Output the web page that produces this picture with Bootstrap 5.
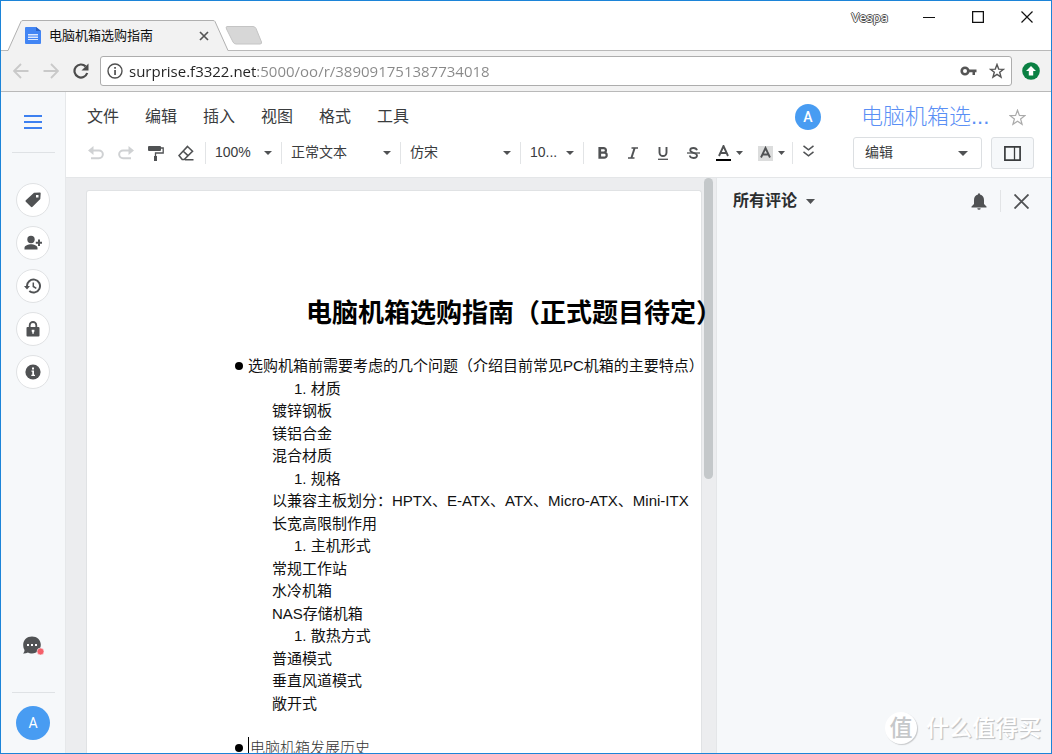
<!DOCTYPE html>
<html lang="zh-CN">
<head>
<meta charset="utf-8">
<meta name="viewport" content="width=device-width, initial-scale=1">
<title>电脑机箱选购指南</title>
<link rel="stylesheet" href="https://cdn.jsdelivr.net/npm/bootstrap@5.3.0/dist/css/bootstrap.min.css">
<style>
  body { font-family: "Liberation Sans", "Noto Sans CJK SC", sans-serif; font-size: 14px; color: #3a3c3e; background: #fff; }
  button { color: inherit; }
  svg { display: block; flex: none; }
  .window { border: 1px solid #1c84d8; }
  .plain { border: 0; background: none; padding: 0; display: flex; align-items: center; justify-content: center; flex: none; }

  /* browser chrome */
  .titlebar { height: 50px; border-bottom: 1px solid #b9b9b9; padding-left: 6px; }
  .tab { width: 222px; height: 31px; margin-bottom: -1px; padding: 0 20px 0 18px; color: #111; font-size: 13px; }
  .tab-shape { position: absolute; inset: 0; z-index: 0; }
  .tab > :not(.tab-shape) { position: relative; }
  .newtab { margin: 0 0 4px -4px; }
  .profile { color: #fff; font-size: 13px; font-family: "Noto Sans", sans-serif; line-height: 16px; text-shadow: 1px 0 #555, -1px 0 #555, 0 1px #555, 0 -1px #555; }
  .winbtn { width: 49px; height: 31px; color: #111; }
  .addressbar { height: 41px; background: #f2f2f2; border-bottom: 1px solid #b9b9b9; padding: 0 11px 0 5px; }
  .navbtn { width: 30px; height: 30px; color: #c9c9c9; }
  .omnibox { height: 30px; border: 1px solid #adadad; border-radius: 3px; background: #fff; padding: 0 6px; margin: 0 10px 0 4px; }
  .url { border: 0; outline: 0; padding: 0; margin-left: 6px; height: 26px; font-family: "Open Sans", "Noto Sans", sans-serif; font-size: 15px;
    color: transparent; background: linear-gradient(to right, #222 127px, #888 127px); -webkit-background-clip: text; background-clip: text; }

  /* left rail */
  .rail { width: 65px; background: #f6f8fa; border-right: 1px solid #e6e8ea; color: #505254; }
  .rail-menu { height: 60px; width: 64px; color: #3d80f0; }
  .rule { width: 43px; height: 1px; background: #dfe2e5; flex: none; }
  .round { width: 34px; height: 34px; border: 1px solid #e0e2e4; border-radius: 50%; background: #fff; }
  .round-list { gap: 9px; padding-top: 30px; }
  .rail-foot { gap: 13px; padding-bottom: 13px; }
  .chat { margin-bottom: 23px; }
  .avatar { background: #489cf2; color: #fff; border-radius: 50%; font-family: Roboto, sans-serif; }
  .avatar-lg { width: 34px; height: 34px; font-size: 14px; }
  .avatar-sm { width: 26px; height: 26px; font-size: 14px; font-weight: 500; margin-right: 32px; }

  /* document header */
  .dochead { height: 86px; border-bottom: 1px solid #e4e6e8; padding: 7px 17px 6px 0; }
  .rowline { height: 36px; }
  .menus { gap: 26px; padding-left: 21px; font-size: 16px; }
  .tools { padding-left: 15px; color: #505254; }
  .tool { width: 30px; height: 30px; }
  .tool-wide { width: 42px; height: 30px; gap: 5px; }
  .faded { color: #cfd1d3; }
  .sep { width: 1px; height: 22px; background: #e2e4e6; flex: none; }
  .pick { appearance: none; border: 0; height: 30px; padding: 0 18px 2px 9px; font-size: 14px; color: #3a3c3e; flex: none;
    background: #fff url("data:image/svg+xml,%3Csvg xmlns='http://www.w3.org/2000/svg' width='8' height='4'%3E%3Cpath d='M0 0h8L4 4z' fill='%23505254'/%3E%3C/svg%3E") no-repeat right 9px center; }
  .pick-zoom { width: 75px; } .pick-style { width: 118px; } .pick-font { width: 119px; } .pick-size { width: 62px; }
  .pick-mode { width: 129px; height: 32px; padding-left: 11px; border: 1px solid #dcdfe2; border-radius: 3px;
    background-image: url("data:image/svg+xml,%3Csvg xmlns='http://www.w3.org/2000/svg' width='10' height='5'%3E%3Cpath d='M0 0h10L5 5z' fill='%23505254'/%3E%3C/svg%3E"); background-position: right 13px center; }
  .side { width: 181px; flex: none; }
  .doctitle { font-size: 22px; line-height: 30px; color: #5a8ff5; font-weight: 300; text-decoration: none; white-space: nowrap; }
  .split { width: 43px; height: 32px; border: 1px solid #dcdfe2; border-radius: 3px; background: #f6f8fa; }

  /* editor */
  .canvas { background: #ecedef; padding: 12px 14px 0 20px; min-width: 0; }
  .thumb { position: absolute; top: 0; right: 3px; width: 9px; height: 301px; border-radius: 5px; background: #c4c8ca; }
  .sheet { background: #fff; border: 1px solid #e0e2e4; border-bottom: 0; border-radius: 3px 3px 0 0; padding: 103px 0 0 148px; color: #111; font-size: 15px; line-height: 1.5; white-space: nowrap; }
  .sheet h1 { font-size: 26px; line-height: 39px; font-weight: 700; color: #000; margin: 0 0 22px; padding-left: 71px; }
  .sheet ul, .sheet p { margin: 0; padding: 0; list-style: none; }
  .dot { gap: 5px; }
  .dot::before { content: ""; flex: none; width: 8px; height: 8px; border-radius: 50%; background: #000; }
  .sheet .step { padding-left: 59px; }
  .sheet .sub { padding-left: 37px; }
  .sheet .later { margin-top: 22px; color: #333; font-weight: 300; }
  .caretmark { border-left: 1px solid #000; padding-left: 1px; }

  /* comments panel */
  .panel { width: 335px; flex: none; background: #f6f8fa; border-left: 1px solid #e4e6e8; color: #505254; }
  .panel-head { height: 46px; padding: 0 22px 0 16px; gap: 13px; }
  .panel-title { color: #2c2e30; font-size: 16px; font-weight: 700; gap: 9px; }
  .stamp { position: absolute; right: 10px; bottom: 8px; gap: 9px; color: #fff; font-size: 23px; line-height: 34px; font-weight: 500; text-shadow: 1px 1px 1px #c2c4c6, 1px 1px #d0d2d4; }
  .stamp-disc { width: 32px; height: 32px; border-radius: 50%; background: #fff; color: #c6c8ca; text-shadow: none; box-shadow: 1px 1px 1px #c8cacc; }
</style>
</head>
<body>
<div class="window vh-100 d-flex flex-column overflow-hidden position-relative">
  <header>
    <div class="titlebar d-flex align-items-end">
      <div class="tab d-flex align-items-center position-relative">
        <svg class="tab-shape" width="222" height="31" viewBox="0 0 222 31" fill="#f2f2f2" stroke="#b0b0b0"><path d="M0 30.500H1L14 1.500Q14.500 .5 16 .5H206Q207.500 .5 208 1.500L221 30.500"/><path d="M1.500 30.500H220.500" stroke="#f2f2f2"/></svg>
        <svg width="16" height="17" viewBox="0 0 16 17"><path fill="#4285f4" d="M1 0h10l5 4v12a1 1 0 0 1-1 1H1a1 1 0 0 1-1-1V1a1 1 0 0 1 1-1z"/><path fill="#2a62c4" d="M11 0l5 4h-5z"/><path fill="#dce8fd" d="M3 7h10v1.500H3zM3 9.500h10V11H3zM3 12h10v1H3z"/></svg>
        <span class="ms-1 ps-1 flex-grow-1">电脑机箱选购指南</span>
        <button class="plain" aria-label="关闭标签页"><svg width="10" height="10" viewBox="0 0 10 10" stroke="#555" stroke-width="1.700"><path d="M1 1l8 8M9 1l-8 8"/></svg></button>
      </div>
      <button class="plain newtab" aria-label="新标签页"><svg width="38" height="20" viewBox="0 0 38 20"><path d="M2 .5h26q2 0 3 2l5.500 13.500q.5 2-1.500 2H11q-2 0-3-2L1.500 3q-1-2.500.5-2.500z" fill="#d7d7d7" stroke="#c4c4c4"/></svg></button>
      <div class="ms-auto d-flex align-items-center align-self-start">
        <span class="profile me-3">Vespa</span>
        <button class="plain winbtn" aria-label="最小化"><svg width="12" height="12" viewBox="0 0 12 12" stroke="currentColor"><path d="M0 6.500h12"/></svg></button>
        <button class="plain winbtn" aria-label="最大化"><svg width="12" height="12" viewBox="0 0 12 12" fill="none" stroke="currentColor" stroke-width="1.300"><path d="M.6.6h10.800v10.800H.6z"/></svg></button>
        <button class="plain winbtn" aria-label="关闭"><svg width="12" height="12" viewBox="0 0 12 12" stroke="currentColor" stroke-width="1.200"><path d="M.5.5l11 11M11.500.5l-11 11"/></svg></button>
      </div>
    </div>
    <div class="addressbar d-flex align-items-center">
      <button class="plain navbtn" aria-label="后退"><svg width="16" height="16" viewBox="0 0 16 16" fill="none" stroke="currentColor" stroke-width="1.800"><path d="M15.500 8H1.500M8 1L1 8l7 7"/></svg></button>
      <button class="plain navbtn" aria-label="前进"><svg width="16" height="16" viewBox="0 0 16 16" fill="none" stroke="currentColor" stroke-width="1.800"><path d="M.5 8h14M8 1l7 7-7 7"/></svg></button>
      <button class="plain navbtn" aria-label="刷新"><svg width="16" height="16" viewBox="0 0 16 16"><path d="M12.600 3.400A6.500 6.500 0 1 0 14.200 10" fill="none" stroke="#4c4c4c" stroke-width="2.200"/><path d="M15.500.5v7h-7z" fill="#4c4c4c"/></svg></button>
      <div class="omnibox d-flex align-items-center flex-grow-1">
        <svg width="16" height="16" viewBox="0 0 16 16"><circle cx="8" cy="8" r="7" fill="none" stroke="#505050" stroke-width="1.400"/><path d="M7.200 7h1.700v5H7.200zM7.200 4h1.700v1.700H7.200z" fill="#505050"/></svg>
        <input class="url flex-grow-1" type="text" aria-label="地址" value="surprise.f3322.net:5000/oo/r/389091751387734018">
        <svg class="me-2" width="17" height="12" viewBox="0 0 17 12"><circle cx="5" cy="6" r="3.300" fill="none" stroke="#555" stroke-width="2.600"/><path d="M8 4.500h8.500v2.800H15V10h-2.500V7.300H8z" fill="#555"/></svg>
        <button class="plain ms-1" aria-label="收藏"><svg width="16" height="16" viewBox="0 0 16 16" fill="none" stroke="#555" stroke-width="1.400"><path d="M8 1.500l1.700 4.600 4.800.2-3.800 3 1.300 4.700L8 11.300 4 14l1.300-4.700-3.800-3 4.800-.2z"/></svg></button>
      </div>
      <button class="plain" aria-label="更新"><svg width="18" height="18" viewBox="0 0 18 18"><circle cx="9" cy="9" r="8.800" fill="#0b8043"/><path fill="#fff" d="M9 4l5 5h-2.800v4.500H6.800V9H4z"/></svg></button>
    </div>
  </header>

  <div class="d-flex flex-grow-1 overflow-hidden">
    <nav class="rail d-flex flex-column align-items-center flex-shrink-0" aria-label="侧栏">
      <button class="plain rail-menu" aria-label="菜单"><svg width="18" height="14" viewBox="0 0 18 14" stroke="currentColor" stroke-width="1.800"><path d="M0 1h18M0 7h18M0 13h18"/></svg></button>
      <div class="rule"></div>
      <div class="round-list d-flex flex-column">
        <button class="plain round" aria-label="标签"><svg width="16" height="16" viewBox="0 0 16 16" fill="currentColor"><path fill-rule="evenodd" d="M9 .8L15 .5q.7 0 .7.700L15.300 7 7.500 14.800q-.8.700-1.600 0L.8 9.800q-.7-.8 0-1.600zM11 3v2.500h2.500V3z"/></svg></button>
        <button class="plain round" aria-label="添加协作者"><svg width="18" height="16" viewBox="0 0 18 16" fill="currentColor"><circle cx="7" cy="4.500" r="3.700"/><path d="M.5 14.500v-1.500c0-2.500 4-3.700 6.500-3.700s6.500 1.200 6.500 3.700v1.500zM14 4.500h2v2.200h2v2h-2V11h-2V8.700h-2.200v-2H14z"/></svg></button>
        <button class="plain round" aria-label="历史记录"><svg width="18" height="16" viewBox="0 0 18 16"><path d="M3 8.500A6.500 6.500 0 1 1 5.300 13" fill="none" stroke="currentColor" stroke-width="2"/><path d="M0 8h6L3 11.500z" fill="currentColor"/><path d="M9.300 4.500v4l3 1.800" fill="none" stroke="currentColor" stroke-width="1.500"/></svg></button>
        <button class="plain round" aria-label="权限"><svg width="14" height="16" viewBox="0 0 14 16"><path d="M3.700 7V4.300a3.300 3.300 0 0 1 6.600 0V7" fill="none" stroke="currentColor" stroke-width="1.800"/><path fill="currentColor" fill-rule="evenodd" d="M1.500 6h11q1 0 1 1v7.500q0 1-1 1h-11q-1 0-1-1V7q0-1 1-1zM5.700 8.800v1.800l.6.700v1.500h1.500v-1.500l.6-.7V8.800z"/></svg></button>
        <button class="plain round" aria-label="信息"><svg width="16" height="16" viewBox="0 0 16 16"><circle cx="8" cy="8" r="7.600" fill="currentColor"/><path fill="#fff" d="M6.500 6.500H9v4.300h1V12H6.300v-1.200h1V7.700h-.8zM7 3.500h2v2H7z"/></svg></button>
      </div>
      <div class="rail-foot mt-auto d-flex flex-column align-items-center">
        <button class="plain chat" aria-label="消息"><svg width="22" height="20" viewBox="0 0 22 20"><path fill="currentColor" d="M10 .5c5 0 8.800 3.500 8.800 8.300S15 17.500 10 17.500c-1.500 0-3-.4-4-1-1.500.8-3.500 1.200-5 1 1-.9 1.500-2 1.500-3.500C1.500 12.500 1.200 10.500 1.200 8.800 1.200 4 5 .5 10 .5z"/><path fill="#fff" d="M5 8h2v2H5zM9 8h2v2H9zM13 8h2v2h-2z"/><circle cx="18.500" cy="15.500" r="3.500" fill="#f5606a" stroke="#f6f8fa" stroke-width=".6"/></svg></button>
        <div class="rule"></div>
        <button class="plain avatar avatar-lg" aria-label="账户">A</button>
      </div>
    </nav>

    <div class="flex-grow-1 d-flex flex-column overflow-hidden">
      <div class="dochead d-flex flex-shrink-0">
        <div class="flex-grow-1">
          <div class="rowline menus d-flex align-items-center">
            <button class="plain">文件</button><button class="plain">编辑</button><button class="plain">插入</button><button class="plain">视图</button><button class="plain">格式</button><button class="plain">工具</button>
            <span class="avatar avatar-sm d-flex align-items-center justify-content-center ms-auto"><span>A</span></span>
          </div>
          <div class="rowline tools d-flex align-items-center">
            <button class="plain tool faded" aria-label="撤销"><svg width="16" height="14" viewBox="0 0 16 14"><path d="M4 4.500h7a3.700 3.700 0 0 1 0 7.700H3" fill="none" stroke="currentColor" stroke-width="2"/><path d="M5.500 0v9L0 4.500z" fill="currentColor"/></svg></button>
            <button class="plain tool faded" aria-label="重做"><svg width="16" height="14" viewBox="0 0 16 14"><path d="M12 4.500H5a3.700 3.700 0 0 0 0 7.700h8" fill="none" stroke="currentColor" stroke-width="2"/><path d="M10.500 0v9L16 4.500z" fill="currentColor"/></svg></button>
            <button class="plain tool" aria-label="格式刷"><svg width="16" height="15" viewBox="0 0 16 15"><path d="M0 1q0-1 1-1h11q1 0 1 1v3q0 1-1 1H1Q0 5 0 4zM6 10h3v5H6z" fill="currentColor"/><path d="M13 2h2.200v5H7.500v3" fill="none" stroke="currentColor" stroke-width="1.300"/></svg></button>
            <button class="plain tool" aria-label="清除格式"><svg width="16" height="16" viewBox="0 0 16 16" fill="none" stroke="currentColor" stroke-width="1.600"><path d="M9.500 1.500l5 4.700-8.300 8.300h-2L1 10.500zM5 6l5 4.700M7 14.800h8.500"/></svg></button>
            <span class="sep ms-1"></span>
            <select class="pick pick-zoom" aria-label="缩放"><option>100%</option></select>
            <span class="sep"></span>
            <select class="pick pick-style" aria-label="样式"><option>正常文本</option></select>
            <span class="sep"></span>
            <select class="pick pick-font" aria-label="字体"><option>仿宋</option></select>
            <span class="sep"></span>
            <select class="pick pick-size" aria-label="字号"><option>10...</option></select>
            <span class="sep me-1"></span>
            <button class="plain tool" aria-label="加粗"><svg width="12" height="12" viewBox="0 0 12 12"><path d="M2.500 1.200h4.200a2.100 2.100 0 0 1 0 4.500H3h4.200a2.400 2.400 0 0 1 0 5H2.500zM3 1v10" fill="none" stroke="currentColor" stroke-width="2.200"/></svg></button>
            <button class="plain tool" aria-label="斜体"><svg width="12" height="12" viewBox="0 0 12 12" fill="none" stroke="currentColor"><path stroke-width="2" d="M7.600 1L4.400 11"/><path stroke-width="1.500" d="M4.500 1H11M1 11h6.500"/></svg></button>
            <button class="plain tool" aria-label="下划线"><svg width="12" height="13" viewBox="0 0 12 13" fill="none" stroke="currentColor"><path stroke-width="1.900" d="M2.500 0v5.500a3.500 3.500 0 0 0 7 0V0"/><path stroke-width="1.300" d="M1 12.300h10"/></svg></button>
            <button class="plain tool" aria-label="删除线"><svg width="13" height="12" viewBox="0 0 13 12" fill="none" stroke="currentColor"><path stroke-width="1.800" d="M10 3.300C9.500 1.500 8 1 6.500 1 4.500 1 3.200 2 3.200 3.300 3.200 6.500 10 5 10 8.500 10 10 8.500 11 6.500 11S3 10.300 2.800 8.500"/><path stroke-width="1.300" d="M0 6h13"/></svg></button>
            <button class="plain tool-wide" aria-label="文字颜色"><svg width="15" height="16" viewBox="0 0 15 16"><path d="M3 11L7.500 1 12 11M4.500 8h6" fill="none" stroke="currentColor" stroke-width="1.900"/><path d="M0 14h15v2H0z" fill="#000"/></svg><svg width="7" height="4" viewBox="0 0 7 4"><path d="M0 0h7L3.500 4z" fill="currentColor"/></svg></button>
            <button class="plain tool-wide" aria-label="背景颜色"><svg width="15" height="15" viewBox="0 0 15 15"><path d="M0 0h15v15H0z" fill="#dcdddd"/><path d="M3 11.500L7.500 2 12 11.500M4.500 8.500h6" fill="none" stroke="currentColor" stroke-width="1.900"/></svg><svg width="7" height="4" viewBox="0 0 7 4"><path d="M0 0h7L3.500 4z" fill="currentColor"/></svg></button>
            <span class="sep"></span>
            <button class="plain tool pb-1" aria-label="更多"><svg width="11" height="12" viewBox="0 0 11 12" fill="none" stroke="currentColor" stroke-width="1.500"><path d="M.5.8l5 4 5-4M.5 6.800l5 4 5-4"/></svg></button>
          </div>
        </div>
        <div class="side">
          <div class="rowline d-flex align-items-center px-2">
            <a class="doctitle" href="#">电脑机箱选...</a>
            <button class="plain ms-auto" aria-label="星标"><svg width="17" height="17" viewBox="0 0 17 17" fill="none" stroke="#aaa" stroke-width="1.200"><path d="M8.500 1.200l1.900 5.200 5.500.2-4.300 3.400 1.500 5.300-4.600-3-4.600 3L5.400 10 1.100 6.600l5.500-.2z"/></svg></button>
          </div>
          <div class="rowline d-flex align-items-center justify-content-between">
            <select class="pick pick-mode" aria-label="模式"><option>编辑</option></select>
            <button class="plain split" aria-label="侧边面板"><svg width="17" height="15" viewBox="0 0 17 15" fill="none" stroke="currentColor" stroke-width="1.700"><path d="M.9.900h15.200v13.200H.9z"/><path stroke-width="1.300" d="M10.500 1v13"/></svg></button>
          </div>
        </div>
      </div>

      <div class="d-flex flex-grow-1 overflow-hidden">
        <main class="canvas flex-grow-1 d-flex flex-column position-relative">
          <div class="thumb"></div>
          <article class="sheet flex-grow-1">
            <h1 class="position-relative">电脑机箱选购指南（正式题目待定）</h1>
            <ul><li class="dot d-flex align-items-center">选购机箱前需要考虑的几个问题（介绍目前常见PC机箱的主要特点）</li></ul>
            <p class="step">1. 材质</p>
            <p class="sub">镀锌钢板</p>
            <p class="sub">镁铝合金</p>
            <p class="sub">混合材质</p>
            <p class="step">1. 规格</p>
            <p class="sub">以兼容主板划分：HPTX、E-ATX、ATX、Micro-ATX、Mini-ITX</p>
            <p class="sub">长宽高限制作用</p>
            <p class="step">1. 主机形式</p>
            <p class="sub">常规工作站</p>
            <p class="sub">水冷机箱</p>
            <p class="sub">NAS存储机箱</p>
            <p class="step">1. 散热方式</p>
            <p class="sub">普通模式</p>
            <p class="sub">垂直风道模式</p>
            <p class="sub">敞开式</p>
            <ul class="later"><li class="dot d-flex align-items-center"><span class="caretmark">电脑机箱发展历史</span></li></ul>
          </article>
        </main>
        <aside class="panel">
          <div class="panel-head d-flex align-items-center">
            <button class="plain panel-title">所有评论 <svg width="9" height="5" viewBox="0 0 9 5"><path d="M0 0h9L4.500 5z" fill="#505254"/></svg></button>
            <button class="plain ms-auto" aria-label="通知"><svg width="16" height="17" viewBox="0 0 16 17" fill="currentColor"><path d="M7 1.500V.5h2v1c2.700.5 4 2.700 4 5.500v4l2.500 2.500v1H.5v-1L3 11V7c0-2.800 1.300-5 4-5.500zM6.300 15.200h3.400q0 1.500-1.700 1.500t-1.700-1.500z"/></svg></button>
            <span class="sep"></span>
            <button class="plain" aria-label="关闭面板"><svg width="15" height="15" viewBox="0 0 15 15" stroke="currentColor" stroke-width="1.900"><path d="M.5.5l14 14M14.500.5l-14 14"/></svg></button>
          </div>
        </aside>
      </div>
    </div>
  </div>

  <div class="stamp d-flex align-items-center"><span class="stamp-disc d-flex align-items-center justify-content-center">值</span><span>什么值得买</span></div>
</div>
<script src="https://cdn.jsdelivr.net/npm/bootstrap@5.3.0/dist/js/bootstrap.bundle.min.js"></script>
</body>
</html>
